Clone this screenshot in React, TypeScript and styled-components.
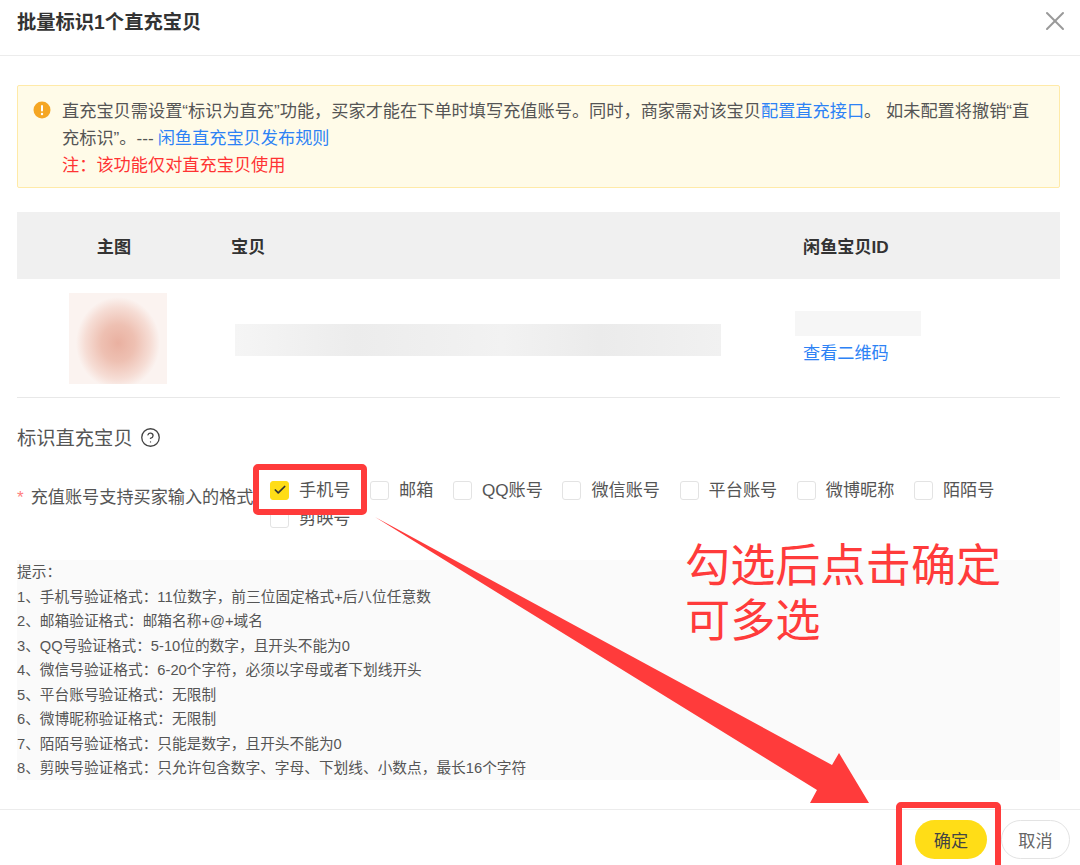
import React from "react";
import styled, { createGlobalStyle } from "styled-components";
import { CircleHelp, X, Check } from "lucide-react";

const GlobalStyle = createGlobalStyle`
  html, body {
    margin: 0;
    padding: 0;
    background: #fff;
  }
  body {
    font-family: "Liberation Sans", "Noto Sans CJK SC", sans-serif;
  }
`;

const formats = ["手机号", "邮箱", "QQ账号", "微信账号", "平台账号", "微博昵称", "陌陌号", "剪映号"];

const tips = [
  "提示：",
  "1、手机号验证格式：11位数字，前三位固定格式+后八位任意数",
  "2、邮箱验证格式：邮箱名称+@+域名",
  "3、QQ号验证格式：5-10位的数字，且开头不能为0",
  "4、微信号验证格式：6-20个字符，必须以字母或者下划线开头",
  "5、平台账号验证格式：无限制",
  "6、微博昵称验证格式：无限制",
  "7、陌陌号验证格式：只能是数字，且开头不能为0",
  "8、剪映号验证格式：只允许包含数字、字母、下划线、小数点，最长16个字符",
];

export default function App() {
  return (
    <Dialog>
      <GlobalStyle />
      <Header>
        <Title>批量标识1个直充宝贝</Title>
        <CloseIcon size={32} strokeWidth={1.5} />
      </Header>

      <Body>
        <Alert>
          <AlertIcon viewBox="0 0 18 18">
            <circle cx="9" cy="9" r="8.5" fill="#f5a623" />
            <rect x="8" y="4" width="2" height="6.5" rx="1" fill="#fff" />
            <circle cx="9" cy="13" r="1.2" fill="#fff" />
          </AlertIcon>
          <AlertText>
            直充宝贝需设置“标识为直充”功能，买家才能在下单时填写充值账号。同时，商家需对该宝贝
            <Link>配置直充接口</Link>。 如未配置将撤销“直充标识”。---
            <RuleLink>闲鱼直充宝贝发布规则</RuleLink>
            <Note>注：该功能仅对直充宝贝使用</Note>
          </AlertText>
        </Alert>

        <TableHead>
          <HeadCell $center>主图</HeadCell>
          <HeadCell>宝贝</HeadCell>
          <HeadCell>闲鱼宝贝ID</HeadCell>
        </TableHead>
        <TableRow>
          <ThumbCell>
            <Thumb />
          </ThumbCell>
          <BodyCell>
            <BlurTitle />
          </BodyCell>
          <IdCell>
            <BlurId />
            <QrLink>查看二维码</QrLink>
          </IdCell>
        </TableRow>

        <SectionTitle>
          标识直充宝贝
          <CircleHelp size={21} strokeWidth={1.5} color="#444" />
        </SectionTitle>

        <FormRow>
          <FormLabel>
            <Star>*</Star>充值账号支持买家输入的格式
          </FormLabel>
          <Options>
            {formats.map((name, i) => (
              <Option key={name}>
                <Box $checked={i === 0}>{i === 0 && <Check size={14} strokeWidth={3} color="#333" />}</Box>
                {name}
              </Option>
            ))}
          </Options>
        </FormRow>

        <TipBox>
          {tips.map((tip) => (
            <div key={tip}>{tip}</div>
          ))}
        </TipBox>
      </Body>

      <Footer>
        <PrimaryButton>确定</PrimaryButton>
        <GhostButton>取消</GhostButton>
      </Footer>

      <MarkBox $x={253} $y={464} $w={114} $h={51} />
      <MarkBox $x={896} $y={802} $w={105} $h={70} />
      <Arrow viewBox="0 0 1080 865">
        <polygon points="375,517 832,765 839,753 869,803 810,803 817,790" fill="#ff3b3b" />
      </Arrow>
      <Annotation>
        勾选后点击确定
        <br />
        可多选
      </Annotation>
    </Dialog>
  );
}

const Dialog = styled.div`
  position: relative;
  width: 1080px;
  height: 865px;
  overflow: hidden;
  background: #fff;
  color: #555;
  font-size: 17.15px;
`;

const Header = styled.header`
  display: flex;
  align-items: center;
  justify-content: space-between;
  box-sizing: border-box;
  height: 56px;
  padding: 0 9px 13px 17px;
  border-bottom: 1px solid #ececec;
`;

const Title = styled.h1`
  margin: 0;
  padding-top: 2px;
  font-size: 19.3px;
  line-height: 41px;
  font-weight: 700;
  color: #333;
`;

const CloseIcon = styled(X)`
  color: #999;
`;

const Body = styled.main`
  padding: 29px 20px 0 17px;
`;

const Alert = styled.div`
  display: flex;
  gap: 11px;
  box-sizing: border-box;
  height: 103px;
  padding: 12px 15px 10px;
  background: #fffbe8;
  border: 1px solid #ffeaa8;
  border-radius: 2px;
`;

const AlertIcon = styled.svg`
  flex: none;
  width: 18px;
  height: 18px;
  margin-top: 3px;
`;

const AlertText = styled.div`
  font-size: 17.2px;
  line-height: 27px;
  color: #555;
`;

const Link = styled.a`
  color: #2d82f5;
`;

const RuleLink = styled(Link)`
  margin-left: 4px;
`;

const Note = styled.div`
  color: #ff3333;
`;

const TableHead = styled.div`
  display: grid;
  grid-template-columns: 194px 572px 1fr;
  align-items: center;
  height: 67px;
  margin-top: 24px;
  background: #f0f0f0;
`;

const HeadCell = styled.div<{ $center?: boolean }>`
  padding-left: ${(p) => (p.$center ? 0 : 20)}px;
  text-align: ${(p) => (p.$center ? "center" : "left")};
  font-weight: 700;
  color: #333;
`;

const TableRow = styled.div`
  display: grid;
  grid-template-columns: 194px 572px 1fr;
  align-items: center;
  box-sizing: border-box;
  height: 119px;
  border-bottom: 1px solid #e8e8e8;
`;

const ThumbCell = styled.div`
  display: flex;
  justify-content: center;
`;

const Thumb = styled.div`
  width: 98px;
  height: 91px;
  margin-left: 8px;
  background: radial-gradient(ellipse 42px 46px at 50% 55%, #e9b0a0 0%, #eec0b2 40%, #f6ddd5 78%, #fbf3f0 100%);
`;

const BodyCell = styled.div`
  padding-left: 24px;
`;

const BlurTitle = styled.div`
  width: 486px;
  height: 32px;
  margin-top: 4px;
  background: linear-gradient(90deg, #f5f5f5, #ececec 25%, #f2f2f2 55%, #ebebeb 75%, #f1f1f1);
`;

const IdCell = styled.div`
  display: flex;
  flex-direction: column;
  align-items: flex-start;
`;

const BlurId = styled.div`
  width: 126px;
  height: 25px;
  margin-left: 12px;
  background: #f6f6f6;
`;

const QrLink = styled.a`
  margin: 4px 0 0 20px;
  line-height: 26px;
  color: #2d82f5;
`;

const SectionTitle = styled.div`
  display: flex;
  align-items: center;
  gap: 7px;
  height: 28px;
  margin-top: 25px;
  font-size: 19.3px;
`;

const FormRow = styled.div`
  display: grid;
  grid-template-columns: 253px 1fr;
  margin-top: 25px;
`;

const FormLabel = styled.div`
  line-height: 28px;
  padding-top: 7px;
  white-space: nowrap;
`;

const Star = styled.span`
  margin-right: 7px;
  color: #ff8080;
`;

const Options = styled.div`
  display: flex;
  flex-wrap: wrap;
`;

const Option = styled.label`
  display: flex;
  align-items: center;
  gap: 10px;
  height: 28px;
  margin-right: 19.6px;
  line-height: 28px;
`;

const Box = styled.span<{ $checked?: boolean }>`
  display: flex;
  align-items: center;
  justify-content: center;
  box-sizing: border-box;
  width: 19px;
  height: 19px;
  border: 1px solid ${(p) => (p.$checked ? "#ffdd17" : "#e3e3e3")};
  border-radius: 3px;
  background: ${(p) => (p.$checked ? "#ffdd17" : "#fff")};
`;

const TipBox = styled.div`
  height: 220px;
  margin-top: 28px;
  background: #fafafa;
  font-size: 14.7px;
  line-height: 24.5px;
  color: #555;
`;

const Footer = styled.footer`
  display: flex;
  justify-content: flex-end;
  align-items: center;
  gap: 14px;
  box-sizing: border-box;
  height: 57px;
  margin-top: 29px;
  padding: 3px 10px 0 0;
  border-top: 1px solid #ececec;
`;

const PrimaryButton = styled.button`
  width: 72px;
  height: 39px;
  border: 0;
  border-radius: 20px;
  background: #ffdd17;
  font: inherit;
  color: #444;
`;

const GhostButton = styled.button`
  width: 69px;
  height: 39px;
  border: 1px solid #e3e3e3;
  border-radius: 20px;
  background: #fff;
  font: inherit;
  color: #666;
`;

const MarkBox = styled.div<{ $x: number; $y: number; $w: number; $h: number }>`
  position: absolute;
  left: ${(p) => p.$x}px;
  top: ${(p) => p.$y}px;
  box-sizing: border-box;
  width: ${(p) => p.$w}px;
  height: ${(p) => p.$h}px;
  border: 6px solid #ff3b3b;
  border-radius: 5px;
`;

const Arrow = styled.svg`
  position: absolute;
  inset: 0;
  width: 1080px;
  height: 865px;
  pointer-events: none;
`;

const Annotation = styled.div`
  position: absolute;
  left: 685px;
  top: 539px;
  font-size: 45.2px;
  line-height: 55px;
  color: #ff3b3b;
`;
